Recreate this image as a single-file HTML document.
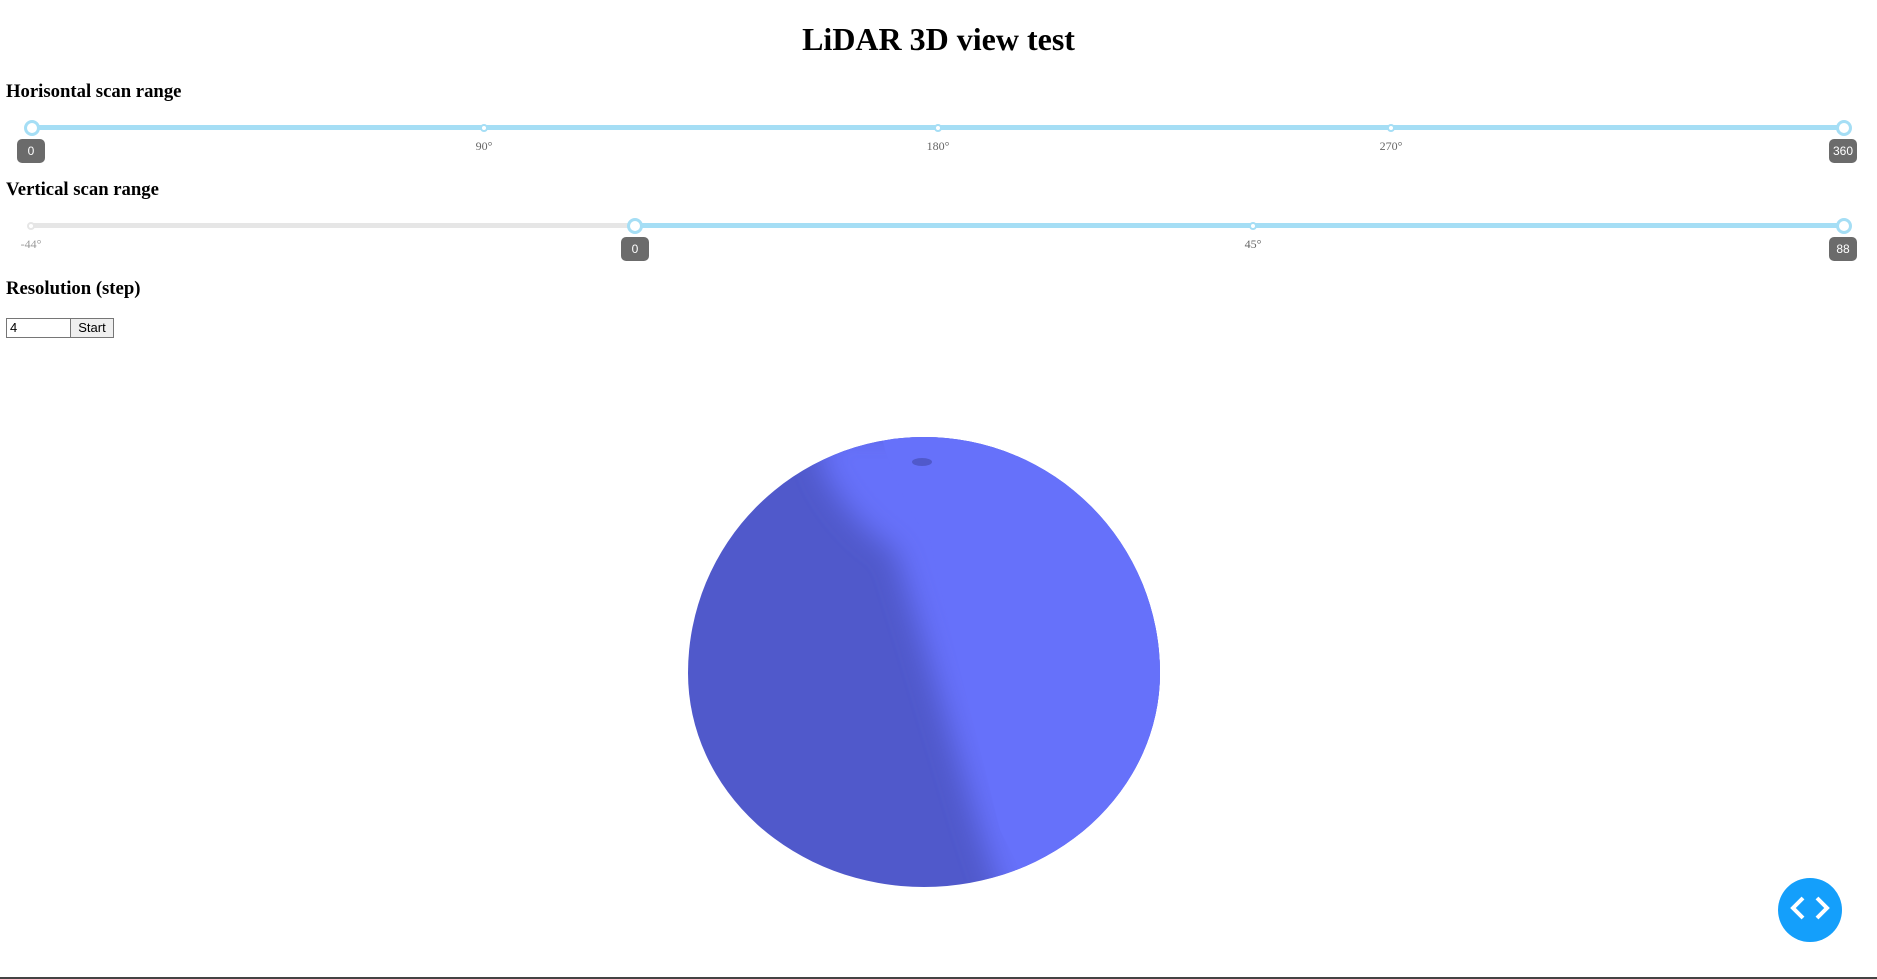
<!DOCTYPE html>
<html><head><meta charset="utf-8"><style>
body{margin:0;width:1877px;height:979px;overflow:hidden;background:#fff;font-family:"Liberation Serif",serif;position:relative}
.a{position:absolute}
h1{position:absolute;left:0;width:1877px;text-align:center;top:21px;margin:0;font-size:32px;font-weight:bold}
h3{position:absolute;left:6px;margin:0;font-size:18.7px;font-weight:bold}
.track{position:absolute;height:5px;border-radius:3px}
.knob{position:absolute;width:10px;height:10px;border:3px solid #a5def5;background:#fff;border-radius:50%}
.tick{position:absolute;width:4px;height:4px;border:2px solid #a5def5;background:#fff;border-radius:50%}
.lbl{position:absolute;font-size:12px;color:#666;transform:translateX(-50%)}
.bub{position:absolute;background:#6b6b6b;color:#fff;font-family:"Liberation Sans",sans-serif;font-size:12px;height:24px;line-height:24px;border-radius:5px;text-align:center;transform:translateX(-50%);min-width:24px;padding:0 2px}
</style></head><body>
<h1>LiDAR 3D view test</h1>
<h3 style="top:81px">Horisontal scan range</h3>
<div class="track" style="left:31px;width:1812px;top:125px;background:#a5def5"></div>
<div class="knob" style="left:24px;top:120px"></div>
<div class="knob" style="left:1836px;top:120px"></div>
<div class="tick" style="left:480px;top:124px"></div>
<div class="tick" style="left:934px;top:124px"></div>
<div class="tick" style="left:1387px;top:124px"></div>
<div class="lbl" style="left:484px;top:139px">90°</div>
<div class="lbl" style="left:938px;top:139px">180°</div>
<div class="lbl" style="left:1391px;top:139px">270°</div>
<div class="bub" style="left:31px;top:139px">0</div>
<div class="bub" style="left:1843px;top:139px">360</div>

<h3 style="top:179px">Vertical scan range</h3>
<div class="track" style="left:31px;width:603px;top:223px;background:#e6e6e6"></div>
<div class="track" style="left:634px;width:1209px;top:223px;background:#a5def5"></div>
<div class="tick" style="left:27px;top:222px;border-color:#e6e6e6"></div>
<div class="knob" style="left:627px;top:218px"></div>
<div class="knob" style="left:1836px;top:218px"></div>
<div class="tick" style="left:1249px;top:222px"></div>
<div class="lbl" style="left:31px;top:237px;color:#999">-44°</div>
<div class="lbl" style="left:1253px;top:237px">45°</div>
<div class="bub" style="left:635px;top:237px">0</div>
<div class="bub" style="left:1843px;top:237px">88</div>

<h3 style="top:278px">Resolution (step)</h3>
<div class="a" style="left:6px;top:318px;width:62px;height:18px;border:1px solid #767676;font-family:'Liberation Sans',sans-serif;font-size:13px;line-height:18px;padding-left:3px;box-sizing:content-box">4</div>
<div class="a" style="left:70px;top:318px;width:42px;height:18px;border:1px solid #767676;background:#efefef;font-family:'Liberation Sans',sans-serif;font-size:13px;line-height:18px;text-align:center">Start</div>

<svg class="a" style="left:680px;top:430px" width="490" height="470">
<defs>
<clipPath id="c"><path d="M8 243 A236 236 0 0 1 480 243 A236 214 0 0 1 8 243Z"/></clipPath>
<filter id="b"><feGaussianBlur stdDeviation="14"/></filter>
</defs>
<path d="M8 243 A236 236 0 0 1 480 243 A236 214 0 0 1 8 243Z" fill="#5059cb"/>
<g clip-path="url(#c)">
<path filter="url(#b)" d="M140 0 L520 0 L520 490 L330 490 L300 400 L270 300 L240 200 L215 120 C180 100 150 60 140 30Z" fill="#6671fa"/>
<path d="M200 0 L500 0 L500 470 L355 470 L320 400 L295 300 L270 200 L250 110 C230 85 215 50 205 20Z" fill="#6671fa"/>
</g>
<ellipse cx="242" cy="32" rx="10" ry="4" fill="#5059cb"/>
</svg>

<svg class="a" style="left:1778px;top:878px" width="64" height="64">
<circle cx="32" cy="32" r="32" fill="#149ffb"/>
<path d="M25 20 L15 30 L25 40 M39 20 L49 30 L39 40" stroke="#fff" stroke-width="4" fill="none"/>
</svg>
<div class="a" style="left:0;top:977px;width:1877px;height:2px;background:#444"></div>
</body></html>
